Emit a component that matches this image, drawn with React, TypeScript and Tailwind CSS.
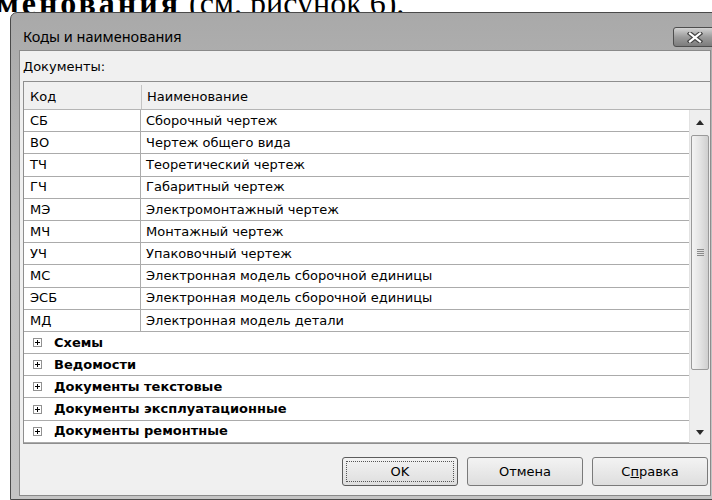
const docs: [string, string][] = [
  ["СБ", "Сборочный чертеж"],
  ["ВО", "Чертеж общего вида"],
  ["ТЧ", "Теоретический чертеж"],
  ["ГЧ", "Габаритный чертеж"],
  ["МЭ", "Электромонтажный чертеж"],
  ["МЧ", "Монтажный чертеж"],
  ["УЧ", "Упаковочный чертеж"],
  ["МС", "Электронная модель сборочной единицы"],
  ["ЭСБ", "Электронная модель сборочной единицы"],
  ["МД", "Электронная модель детали"],
];

const groups = [
  "Схемы",
  "Ведомости",
  "Документы текстовые",
  "Документы эксплуатационные",
  "Документы ремонтные",
];

const ui = "font-['DejaVu_Sans',Tahoma,sans-serif] text-[13px] text-black";

const PlusBox = () => (
  <span className="flex h-[9px] w-[9px] items-center justify-center border border-[#919191] bg-white">
    <svg width="7" height="7" viewBox="0 0 7 7">
      <path d="M1 3.5h5M3.5 1v5" stroke="#000" strokeWidth="1" />
    </svg>
  </span>
);

const ScrollBar = () => (
  <div className="flex w-[21px] flex-col items-center border-l border-[#e2e2e2] bg-[#eeeeee]">
    <div className="flex h-[25px] w-full items-center justify-center">
      <svg width="8" height="5" viewBox="0 0 8 5">
        <path d="M0 5L4 0L8 5Z" fill="#2a2a2a" />
      </svg>
    </div>
    <div className="flex h-[235px] w-[18px] items-center justify-center rounded-[2px] border border-[#9a9a9a] bg-gradient-to-r from-[#f4f4f4] via-[#e4e4e4] to-[#cfcfcf]">
      <div className="flex flex-col gap-[1px]">
        <div className="h-[1px] w-[7px] bg-[#8a8a8a]" />
        <div className="h-[1px] w-[7px] bg-[#8a8a8a]" />
        <div className="h-[1px] w-[7px] bg-[#8a8a8a]" />
        <div className="h-[1px] w-[7px] bg-[#8a8a8a]" />
      </div>
    </div>
    <div className="flex-1" />
    <div className="flex h-[22px] w-full items-center justify-center">
      <svg width="8" height="5" viewBox="0 0 8 5">
        <path d="M0 0L4 5L8 0Z" fill="#2a2a2a" />
      </svg>
    </div>
  </div>
);

const Button = ({
  children,
  primary,
}: {
  children: React.ReactNode;
  primary?: boolean;
}) => (
  <button
    className={
      primary
        ? "flex h-[29px] w-[116px] items-center justify-center rounded-[3px] border border-[#5c5c5c] bg-gradient-to-b from-[#f3f3f3] to-[#dedede] p-[3px]"
        : "flex h-[29px] w-[116px] items-center justify-center rounded-[3px] border border-[#7a7a7a] bg-gradient-to-b from-[#f3f3f3] to-[#dedede]"
    }
  >
    {primary ? (
      <span className="flex h-full w-full items-center justify-center border border-dotted border-[#555]">
        {children}
      </span>
    ) : (
      children
    )}
  </button>
);

export default function App() {
  return (
    <div className="h-[500px] w-[712px] overflow-hidden bg-white">
      {/* tail of the preceding paragraph */}
      <div className="h-[12px] overflow-hidden">
        <p className="-ml-[65px] -mt-[13px] whitespace-nowrap font-['Liberation_Serif',serif] text-[32px] leading-none text-black">
          <b className="tracking-[3px]">наименования</b> (см. рисунок 6).
        </p>
      </div>

      <div className="ml-[10px] flex h-[488px] w-[710px] flex-col rounded-t-[7px] border border-[#4a4a4a] bg-gradient-to-b from-[#a9a9a9] via-[#c2c2c2] to-[#c4c4c4] px-[8px] pb-[3px]">
        <div className="flex h-[37px] items-center justify-between pl-[4px] pt-[11px]">
          <span className="font-['Noto_Sans',sans-serif] text-[14.5px] text-black">
            Коды и наименования
          </span>
          <div className="-mr-[5px] flex h-[20px] w-[43px] items-center justify-center rounded-[3px] border border-[#4e4e4e] bg-gradient-to-b from-[#d4d4d4] via-[#9c9c9c] to-[#7c7c7c]">
            <svg width="16" height="11" viewBox="0 0 16 11">
              <path d="M3 1.5L13 9.5M13 1.5L3 9.5" stroke="#444" strokeWidth="4.5" strokeLinecap="square" />
              <path d="M3 1.5L13 9.5M13 1.5L3 9.5" stroke="#fff" strokeWidth="2.2" strokeLinecap="square" />
            </svg>
          </div>
        </div>

        <div className={`flex flex-1 flex-col border border-[#8a8a8a] bg-[#f0f0f0] ${ui}`}>
          <div className="flex h-[30px] items-center pl-[3px] pt-[1px]">Документы:</div>

          <div className="ml-[3px] flex h-[363px] w-[688px] flex-col border border-[#8e8e8e] bg-white">
            <div className="flex h-[28px] items-center border-b border-[#b5b5b5] bg-[#f0f0f0]">
              <div className="flex h-full w-[117px] items-center pl-[6px] pt-[2px]">Код</div>
              <div className="h-[24px] w-[1px] self-end bg-[#c4c4c4]" />
              <div className="flex h-full items-center pl-[5px] pt-[2px]">Наименование</div>
            </div>

            <div className="flex flex-1">
              <div className="flex flex-1 flex-col">
                {docs.map(([code, name]) => (
                  <div key={code} className="flex h-[22.2px] items-center border-b border-[#ababab]">
                    <div className="flex h-full w-[117px] items-center border-r border-[#ababab] pl-[6px]">
                      {code}
                    </div>
                    <div className="pl-[5px]">{name}</div>
                  </div>
                ))}
                {groups.map((g) => (
                  <div key={g} className="flex h-[22.2px] items-center border-b border-[#ababab] pl-[9px]">
                    <PlusBox />
                    <span className="pl-[12px] font-bold">{g}</span>
                  </div>
                ))}
              </div>
              <ScrollBar />
            </div>
          </div>

          <div className="flex w-[691px] justify-end gap-[9px] pr-[3px] pt-[13px]">
            <Button primary>OK</Button>
            <Button>Отмена</Button>
            <Button>
              <span>
                С<span className="underline">п</span>равка
              </span>
            </Button>
          </div>
        </div>
      </div>
    </div>
  );
}
